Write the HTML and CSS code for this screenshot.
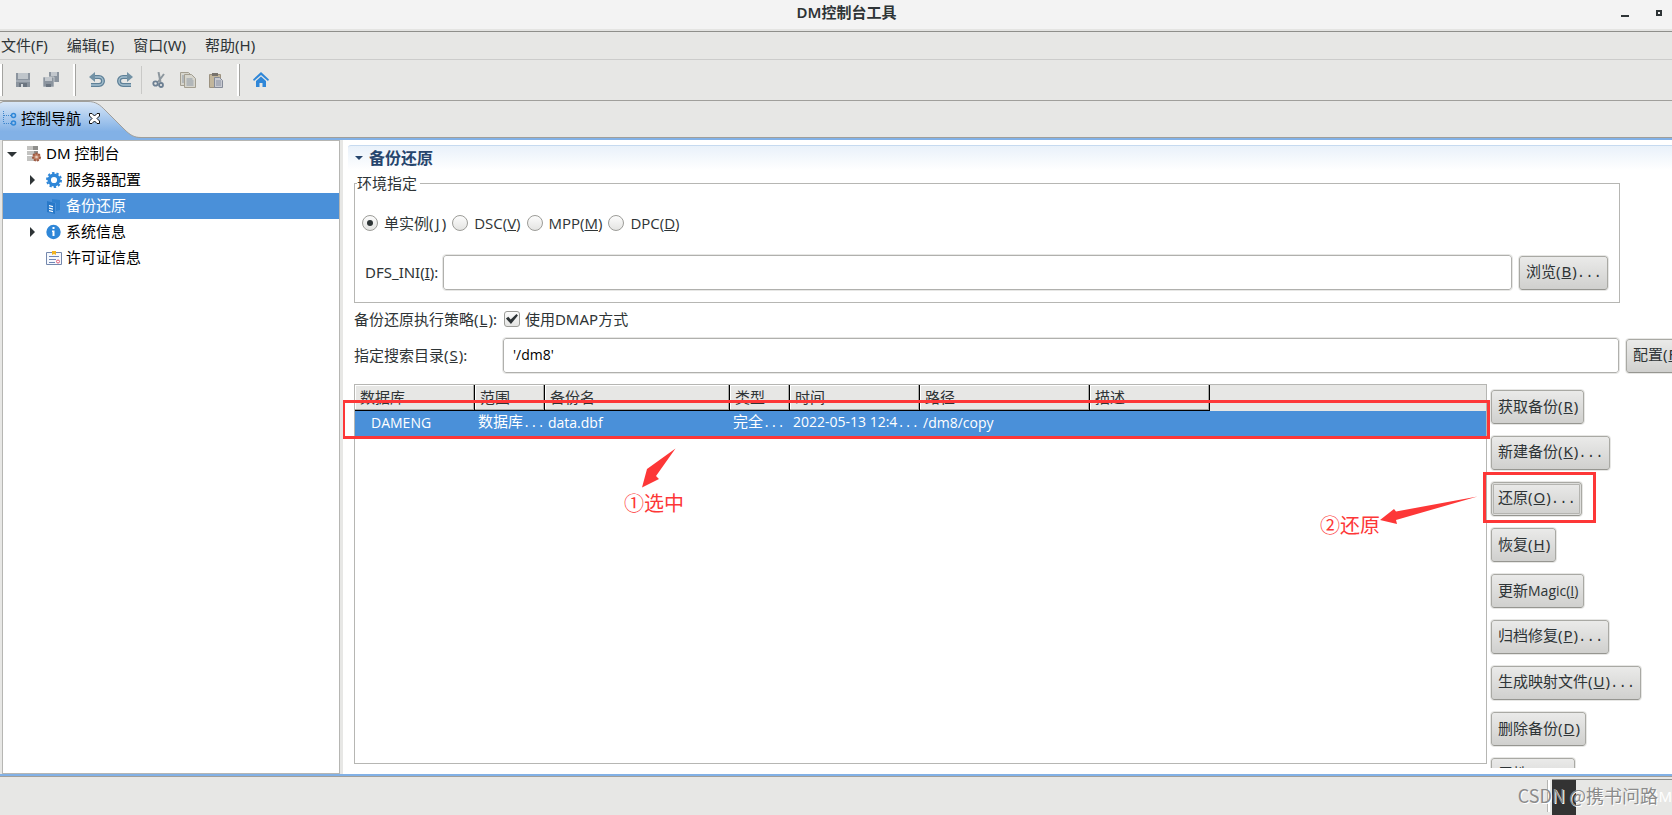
FILE: index.html
```html
<!DOCTYPE html>
<html lang="zh-CN">
<head>
<meta charset="utf-8">
<title>DM控制台工具</title>
<link rel="stylesheet" href="styles.css">
</head>
<body>
<div class="app">
  <header class="titlebar">
    <h1 class="titlebar-text">DM控制台工具</h1>
    <div class="window-controls">
      <button class="win-btn" aria-label="最小化"><span class="win-min"></span></button>
      <button class="win-btn" aria-label="最大化"><span class="win-max"></span></button>
    </div>
  </header>

  <nav class="menubar">
    <button class="menu-item">文件(F)</button>
    <button class="menu-item">编辑(E)</button>
    <button class="menu-item">窗口(W)</button>
    <button class="menu-item">帮助(H)</button>
  </nav>

  <div class="toolbar">
    <span class="handle"></span>
    <div class="tool-group group-save">
      <button class="tool" aria-label="保存"><svg width="16" height="16" viewBox="0 0 16 16"><path d="M1 1h14v14H1z" fill="#8b949e"/><path d="M3 1h10v6H3z" fill="#bfc5ca"/><path d="M1 8h14v2H1z" fill="#a3abb4"/><path d="M4 11h8v4H4z" fill="#6b7580"/><path d="M6 12h2v3H6z" fill="#d5d9dc"/></svg></button>
      <button class="tool" aria-label="全部保存"><svg width="16" height="16" viewBox="0 0 16 16"><path d="M6 0h10v10H6z" fill="#8b949e"/><path d="M8 0h6v4H8z" fill="#c2c7cc"/><path d="M0 5h11v10H0z" fill="#8b949e" stroke="#e7e7e5" stroke-width=".6"/><path d="M2 5h7v4H2z" fill="#c2c7cc"/><path d="M3 12h5v3H3z" fill="#6b7580"/></svg></button>
    </div>
    <span class="handle"></span>
    <div class="tool-group group-undo">
      <button class="tool" aria-label="撤销"><svg width="16" height="16" viewBox="0 0 16 16"><path d="M4 5h6a4 4 0 0 1 0 8H2" fill="none" stroke="#5f8198" stroke-width="4"/><path d="M4 5h6a4 4 0 0 1 0 8H2" fill="none" stroke="#a5c0cf" stroke-width="1.4"/><path d="M0 5l6-5v10z" fill="#7392a5"/></svg></button>
      <button class="tool" aria-label="重做"><svg width="16" height="16" viewBox="0 0 16 16"><path d="M12 5H6a4 4 0 0 0 0 8h8" fill="none" stroke="#5f8198" stroke-width="4"/><path d="M12 5H6a4 4 0 0 0 0 8h8" fill="none" stroke="#a5c0cf" stroke-width="1.4"/><path d="M16 5l-6-5v10z" fill="#7392a5"/></svg></button>
    </div>
    <span class="divider"></span>
    <div class="tool-group group-edit">
      <button class="tool" aria-label="剪切"><svg width="16" height="16" viewBox="0 0 16 16" fill="none"><path d="M6.500 0l2 10M12 2L6 10" stroke="#8d979e" stroke-width="2"/><circle cx="3.500" cy="11.500" r="2.200" stroke="#6c7f92" stroke-width="1.800"/><circle cx="9" cy="13" r="2" stroke="#6c7f92" stroke-width="1.800"/></svg></button>
      <button class="tool" aria-label="复制"><svg width="16" height="16" viewBox="0 0 16 16" fill="#d6d5cd" stroke="#a39e90"><path d="M.5.5h8l3 3v10H.5z"/><path d="M4.500 2.500h7l4 4v9h-11z"/><path d="M2 4h2M2 6h2M2 8h2M2 10h2M6.500 7h6M6.500 9h7M6.500 11h7M6.500 13h7" stroke="#8d98a5"/></svg></button>
      <button class="tool" aria-label="粘贴"><svg width="16" height="16" viewBox="0 0 16 16"><path d="M1.500 2.500h11v13h-11z" fill="#c2b69c" stroke="#9c9280"/><path d="M4 1h6v3H4z" fill="#77736c"/><path d="M6.500 5.500h5l3 3v7h-8z" fill="#c9cbd2" stroke="#858b98"/><path d="M8 9h5M8 11h5M8 13h5" stroke="#8990a0"/></svg></button>
    </div>
    <span class="handle"></span>
    <button class="tool tool-home" aria-label="主页"><svg width="16" height="16" viewBox="0 0 16 16"><path d="M8 0l8 7.500-1 1.500-7-6-7 6L0 7.500z" fill="#2f87d8"/><path d="M3 9l5-4.500L13 9v6H9.500v-4h-3v4H3z" fill="#2f87d8"/></svg></button>
  </div>

  <div class="tabstrip">
    <div class="tab">
      <svg class="tab-shape" width="142" height="38" viewBox="0 0 142 38">
        <defs><linearGradient id="tabfill" x1="0" y1="0" x2="0" y2="1"><stop offset="0" stop-color="#d9e7f7"/><stop offset=".8" stop-color="#82b1e6"/></linearGradient></defs>
        <path d="M0 2L3 .5H88C96 .5 100 4 105 9L124 28C130 34 134 36.500 141 36.500V38H0z" fill="url(#tabfill)"/>
        <path d="M0 2L3 .5H88C96 .5 100 4 105 9L124 28C130 34 134 36.500 141 36.500" fill="none" stroke="#a09f9b"/>
      </svg>
      <svg class="tab-icon" width="14" height="16" viewBox="0 0 14 16" fill="none"><path d="M.5 1v12.500M1 5.500h7M1 13.500h7" stroke="#3f87cc" stroke-dasharray="1 1"/><circle cx="10.500" cy="5.500" r="2" stroke="#2f87d8" stroke-width="1.500"/><circle cx="10.500" cy="13" r="2" stroke="#2f87d8" stroke-width="1.500"/></svg>
      <span class="tab-label">控制导航</span>
      <button class="tab-close" aria-label="关闭"><svg width="11" height="11" viewBox="0 0 11 11"><path d="M.5.5H3L5.500 3 8 .5h2.500V3L8 5.500 10.500 8v2.500H8L5.500 8 3 10.500H.5V8L3 5.500.5 3z" fill="#fff" stroke="#111"/></svg></button>
    </div>
  </div>

  <main class="workspace">
    <aside class="tree">
      <div class="node">
        <span class="twisty open"></span>
        <svg width="16" height="16" viewBox="0 0 16 16"><path d="M1 0h11v4H1zM1 5h11v4H1zM1 10h11v5H1z" fill="#c3c3c1"/><path d="M7 0h5v4H7zM8 5h4v4H8z" fill="#8e8e8c"/><circle cx="10.500" cy="11" r="3.500" fill="#c08368" stroke="#9d5840" stroke-width="2" stroke-dasharray="2 1"/><circle cx="10.500" cy="11" r="1.300" fill="#e5c9bb"/></svg>
        <span>DM 控制台</span>
      </div>
      <div class="node child">
        <span class="twisty"></span>
        <svg width="16" height="16" viewBox="0 0 16 16" fill="none" stroke="#2f87d8"><circle cx="8" cy="8" r="4.800" stroke-width="3.400"/><circle cx="8" cy="8" r="7" stroke-width="2" stroke-dasharray="2.400 2"/></svg>
        <span>服务器配置</span>
      </div>
      <div class="node child selected">
        <span class="twisty none"></span>
        <svg width="16" height="16" viewBox="0 0 16 16"><path d="M6 1l8 1v10l-4 1V5L6 4z" fill="#2f80cf"/><path d="M1 3l8 2v11l-8-2z" fill="#2878c8"/><path d="M3 7l4 1v1.300L3 8.300zM3 9.500l4 1v1.300l-4-1zM3 12l4 1v1.300l-4-1z" fill="#fff"/></svg>
        <span>备份还原</span>
      </div>
      <div class="node child">
        <span class="twisty"></span>
        <svg width="16" height="16" viewBox="0 0 16 16"><circle cx="7.500" cy="8" r="7.200" fill="#2f87d8"/><path d="M6.500 3h2v2h-2zM6 6.500h2.500V12h-2V8H6z" fill="#fff"/></svg>
        <span>系统信息</span>
      </div>
      <div class="node child">
        <span class="twisty none"></span>
        <svg width="16" height="16" viewBox="0 0 16 16"><path d="M.5 2.500h15v12H.5z" fill="#f5f8fd" stroke="#7488ad"/><path d="M3 6.500h10M3 9.500h7M3 12.500h6" stroke="#6f86b5"/><path d="M6 1h4v4L8 4 6 5z" fill="#f2b521"/><circle cx="12" cy="11.500" r="1.500" fill="#fff" stroke="#df5b78"/></svg>
        <span>许可证信息</span>
      </div>
    </aside>

    <section class="content">
      <h2 class="section-head"><span class="twisty open"></span>备份还原</h2>

      <fieldset class="env">
        <legend>环境指定</legend>
        <div class="radios">
          <label><input type="radio" name="mode" checked><span class="mixed">单实例(<u>J</u>)</span></label>
          <label><input type="radio" name="mode"><span class="latin">DSC(<u>V</u>)</span></label>
          <label><input type="radio" name="mode"><span class="latin">MPP(<u>M</u>)</span></label>
          <label><input type="radio" name="mode"><span class="latin">DPC(<u>D</u>)</span></label>
        </div>
        <div class="ini-row">
          <label for="ini">DFS_INI(<u>I</u>):</label>
          <input class="field" id="ini" type="text">
          <button class="btn">浏览(<u>B</u>)<span class="dots">...</span></button>
        </div>
      </fieldset>

      <div class="policy">
        <span class="mixed">备份还原执行策略(<u>L</u>):</span>
        <label><input type="checkbox" checked><span>使用DMAP方式</span></label>
      </div>

      <div class="search-row">
        <label class="mixed" for="dir">指定搜索目录(<u>S</u>):</label>
        <input class="field latin" id="dir" type="text" value="'/dm8'">
        <div class="config-slot"><button class="btn">配置(<u>F</u>)<span class="dots">...</span></button></div>
      </div>

      <div class="backup">
        <div class="grid">
          <table>
            <colgroup><col class="c-db"><col class="c-range"><col class="c-name"><col class="c-type"><col class="c-time"><col class="c-path"><col class="c-desc"><col></colgroup>
            <thead><tr><th>数据库</th><th>范围</th><th>备份名</th><th>类型</th><th>时间</th><th>路径</th><th>描述</th><td class="rest"></td></tr></thead>
            <tbody><tr><td class="first latin">DAMENG</td><td>数据库<span class="dots">...</span></td><td class="latin">data.dbf</td><td>完全<span class="dots">...</span></td><td class="latin">2022-05-13 12:4<span class="dots">...</span></td><td class="latin">/dm8/copy</td><td></td><td></td></tr></tbody>
          </table>
          <div class="mark mark-row"></div>
          <div class="note note-select">
            <svg width="34" height="40" viewBox="0 0 34 40"><path d="M33.500.5L5 21 0 39.500 17 31l-3-3z" fill="#fd3737"/></svg>
            <span>①选中</span>
          </div>
        </div>
        <div class="actions">
          <button class="btn">获取备份(<u>R</u>)</button>
          <button class="btn">新建备份(<u>K</u>)<span class="dots">...</span></button>
          <div class="marked">
            <button class="btn focused">还原(<u>O</u>)<span class="dots">...</span></button>
            <div class="mark mark-button"></div>
            <div class="note note-restore">
              <span>②还原</span>
              <svg width="98" height="30" viewBox="0 0 98 30"><path d="M97.500 1.500L16 16.500 14 14 0 25l17 4-1-4z" fill="#fd3737"/></svg>
            </div>
          </div>
          <button class="btn">恢复(<u>H</u>)</button>
          <button class="btn">更新<span class="latin">Magic(<u>I</u>)</span></button>
          <button class="btn">归档修复(<u>P</u>)<span class="dots">...</span></button>
          <button class="btn">生成映射文件(<u>U</u>)<span class="dots">...</span></button>
          <button class="btn">删除备份(<u>D</u>)</button>
          <button class="btn">属性(<u>I</u>)<span class="dots">...</span></button>
        </div>
      </div>
    </section>
  </main>

  <footer class="statusbar">
    <span class="status-sep"></span>
    <div class="heap"><span class="heap-used"></span><span class="heap-text">2M</span></div>
    <span class="watermark">CSDN @携书问路</span>
  </footer>
</div>
</body>
</html>
```
FILE: styles.css
```css
* { box-sizing: border-box; }

body {
  margin: 0;
  font: 15px/20px "Noto Sans", "Noto Sans CJK SC", sans-serif;
  color: #2e3436;
}

button, input {
  font: inherit;
  color: inherit;
  margin: 0;
}

.latin { font-family: "Open Sans", "Noto Sans", sans-serif; font-size: 14px; }
.mixed u { margin: 0 1px; }

.app {
  height: 100vh;
  display: flex;
  flex-direction: column;
  overflow: hidden;
  background: #e7e7e5;
}

/* title bar */
.titlebar {
  flex: none;
  height: 32px;
  display: grid;
  grid-template-columns: 1fr auto 1fr;
  background: #f3f3f3;
  border-bottom: 1px solid #8f8f8b;
  box-shadow: inset 0 -2px #e4e4e2;
}
.titlebar-text {
  grid-column: 2;
  margin: 0;
  padding: 2px 0 0 21px;
  font-size: 15px;
  line-height: 20px;
  font-weight: 600;
}
.window-controls {
  display: flex;
  justify-content: flex-end;
  gap: 22px;
  padding-right: 7px;
}
.win-btn {
  width: 12px;
  height: 26px;
  padding: 0;
  border: 0;
  background: none;
  display: grid;
  place-items: center;
}
.win-min { width: 8px; height: 2px; background: #2e3436; margin-top: 6px; }
.win-max { width: 6px; height: 6px; border: 2px solid #2e3436; }

/* menu and toolbar */
.menubar {
  flex: none;
  height: 28px;
  display: flex;
  gap: 19px;
  padding: 0 0 2px 1px;
  border-bottom: 1px solid #cccccb;
}
.menu-item {
  padding: 0;
  border: 0;
  background: none;
}
.toolbar {
  flex: none;
  height: 41px;
  display: flex;
  align-items: center;
  border-bottom: 1px solid #a09f9b;
}
.handle {
  width: 3px;
  height: 32px;
  background: #fff;
  border-right: 1px solid #a3a3a0;
}
.divider { width: 1px; height: 28px; background: #c9c9c7; }
.tool-group { display: flex; }
.group-save { gap: 12px; padding: 0 14px 0 12px; }
.group-undo { gap: 12px; padding: 0 8px 0 13px; }
.group-edit { gap: 12px; padding: 0 13px 0 10px; }
.tool {
  width: 16px;
  height: 16px;
  padding: 0;
  border: 0;
  background: none;
  display: grid;
}
.tool-home { margin-left: 13px; }

/* view tab */
.tabstrip {
  flex: none;
  height: 39px;
  border-bottom: 2px solid #82b1e6;
  box-shadow: inset 0 -1px #a09f9b;
}
.tab {
  position: relative;
  width: 142px;
  height: 37px;
  display: flex;
  align-items: center;
  padding: 0 0 3px 3px;
  color: #000;
}
.tab > * { position: relative; }
.tab > .tab-shape { position: absolute; left: 0; top: 0; }
.tab-icon { margin-right: 4px; }
.tab-close {
  width: 11px;
  height: 11px;
  margin-left: 8px;
  padding: 0;
  border: 0;
  background: none;
  display: grid;
}

/* workspace */
.workspace {
  flex: 1;
  min-height: 0;
  display: grid;
  grid-template-columns: 338px minmax(0, 1fr);
  column-gap: 3px;
  padding-left: 2px;
}
.tree {
  background: #fff;
  border: 1px solid #b6b6b3;
  color: #000;
}
.node {
  height: 26px;
  display: flex;
  align-items: center;
  gap: 4px;
  padding: 0 0 3px 1px;
}
.node svg { flex: none; margin-top: 3px; }
.node .twisty { margin: 3px 2px 0 0; }
.child { padding-left: 21px; }
.selected { background: #4a90d9; color: #fff; }
.twisty {
  flex: none;
  width: 16px;
  height: 16px;
  display: grid;
  place-items: center;
}
.twisty::before {
  content: "";
  border: 5px solid transparent;
  border-left-color: #2e3436;
  border-right-width: 0;
}
.twisty.open::before {
  border: 5px solid transparent;
  border-top-color: #2e3436;
  border-bottom-width: 0;
}
.twisty.none::before { content: none; }

.content {
  min-width: 0;
  min-height: 0;
  display: flex;
  flex-direction: column;
  overflow: hidden;
  padding: 5px 0 0 11px;
  border-bottom: 6px solid #fff;
  background: #fff;
}
.section-head {
  flex: none;
  display: flex;
  align-items: center;
  gap: 4px;
  height: 28px;
  margin: 0 0 0 -6px;
  padding: 0 0 4px 5px;
  border-top: 1px solid #c6daf0;
  border-top-left-radius: 3px;
  background: linear-gradient(#e9f1fa, #fff 90%);
  font-size: 16px;
  font-weight: 700;
  color: #26456d;
}
.section-head .twisty { width: 12px; }
.section-head .twisty.open::before { border-width: 4px 4px 0; border-top-color: #26456d; }

.env {
  flex: none;
  margin: 0 52px 0 0;
  padding: 20px 11px 12px 7px;
  border: 1px solid #b6b6b3;
  min-width: 0;
}
.env legend { margin-left: -5px; padding: 0 3px 0 0; line-height: 20px; }
.radios { display: flex; gap: 6px; }
.radios .latin { font-size: 15px; }
.radios .mixed u { margin: 0 2px; }
.radios label, .policy label { display: flex; align-items: center; gap: 6px; }
input[type="radio"], input[type="checkbox"] {
  appearance: none;
  width: 16px;
  height: 16px;
  border: 1px solid #9c9c98;
  background: linear-gradient(#fcfcfc, #e4e4e2);
}
input[type="radio"] { border-radius: 50%; display: grid; place-items: center; }
input[type="radio"]:checked::before {
  content: "";
  width: 6px;
  height: 6px;
  border-radius: 50%;
  background: #2e3436;
}
input[type="checkbox"] { border-radius: 3px; display: grid; place-items: center; }
input[type="checkbox"]:checked::before {
  content: "";
  width: 12px;
  height: 10px;
  background: #2e3436;
  clip-path: polygon(0 45%, 20% 28%, 40% 55%, 88% 0, 100% 15%, 42% 100%);
}
.ini-row { display: flex; align-items: center; gap: 7px; margin-top: 22px; padding-left: 3px; }
.ini-row label { width: 71px; padding-bottom: 2px; white-space: nowrap; }
.field {
  flex: 1;
  min-width: 0;
  height: 35px;
  padding: 0 9px 2px;
  border: 1px solid #b0b0ad;
  border-radius: 3px;
  outline: 1px solid #e7e7e5;
  background: #fff;
  color: #000;
}
.btn {
  flex: none;
  height: 34px;
  padding: 0 5px 2px 6px;
  border: 1px solid #a9a9a4;
  border-bottom-color: #969691;
  border-radius: 3px;
  outline: 1px solid #e7e7e5;
  background: linear-gradient(#eaeae9, #d0d0ce);
  white-space: nowrap;
}
.btn > u { margin: 0 1px; }
.focused { box-shadow: inset 0 0 0 1px #dededc, inset 0 0 0 2px #b4b4b0; }
.dots { font-family: "Liberation Mono", monospace; font-size: 14px; }

.policy { flex: none; display: flex; align-items: center; gap: 7px; margin-top: 6px; height: 20px; }
.policy label { gap: 5px; }
.search-row {
  flex: none;
  display: grid;
  grid-template-columns: 142px minmax(0, 1fr) 46px;
  column-gap: 7px;
  align-items: center;
  margin-top: 9px;
}
.search-row label { padding-bottom: 2px; }
.config-slot { display: flex; }

/* backup list */
.backup {
  flex: 1;
  min-height: 0;
  display: flex;
  gap: 3px;
  margin-top: 11px;
}
.grid {
  position: relative;
  flex: 1;
  min-width: 0;
  margin-bottom: 4px;
  border: 1px solid #b6b6b3;
}
table { width: 100%; table-layout: fixed; border-collapse: separate; border-spacing: 0; }
.c-db, .c-desc { width: 120px; }
.c-range { width: 70px; }
.c-name { width: 185px; }
.c-type { width: 60px; }
.c-time { width: 130px; }
.c-path { width: 170px; }
th, td { padding: 0; text-align: left; white-space: nowrap; overflow: hidden; }
th {
  height: 26px;
  padding: 0 0 2px 5px;
  font-weight: 400;
  line-height: 22px;
  background: #e7e7e5;
  border-right: 1px solid #000;
  border-bottom: 1px solid #000;
  box-shadow: inset -1px -1px #a9a9a6, inset 1px 1px #fff;
}
.rest { background: #e7e7e5; }
tbody td { height: 22px; padding: 0 0 2px 3px; background: #4a90d9; color: #fff; line-height: 20px; }
tbody .first { padding-left: 16px; }
tbody .dots { font-size: 12px; }
.actions {
  width: 182px;
  height: 100%;
  flex: none;
  display: flex;
  flex-direction: column;
  align-items: flex-start;
  gap: 12px;
  padding: 6px 0 0 1px;
}
.marked { position: relative; display: flex; }

/* red callouts */
.mark { position: absolute; border: 3px solid #fd3737; pointer-events: none; }
.mark-row { top: 15px; left: -13px; right: -4px; height: 39px; }
.mark-button { inset: -10px -14px -7px -8px; }
.note {
  position: absolute;
  display: flex;
  color: #fd3737;
  font: 20px/24px "Noto Sans CJK SC", sans-serif;
  white-space: nowrap;
}
.note-select { left: 269px; top: 63px; flex-direction: column; align-items: flex-start; gap: 3px; }
.note-select svg { margin-left: 18px; }
.note-restore { right: calc(100% + 13px); top: 13px; align-items: flex-end; }
.note-restore span { position: relative; top: 12px; }

/* status bar */
.statusbar {
  position: relative;
  flex: none;
  height: 41px;
  display: flex;
  justify-content: flex-end;
  border-top: 2px solid #82b1e6;
  box-shadow: inset 0 1px #a09f9b;
}
.status-sep { width: 3px; height: 32px; margin: 4px 2px 0 0; background: #fff; border-left: 1px solid #b5b5b2; }
.heap {
  width: 120px;
  margin-top: 3px;
  display: flex;
  align-items: center;
  border-top: 1px solid #8f8f8b;
}
.heap-used { flex: none; width: 24px; height: 100%; background: #333; }
.heap-text { margin-left: 74px; padding-bottom: 3px; color: #fff; }
.watermark {
  position: absolute;
  right: 14px;
  top: 7px;
  color: #8b8b8b;
  font: 18px/24px "Noto Sans CJK SC", sans-serif;
  text-shadow: 1px 1px #fff;
  white-space: nowrap;
}
```
